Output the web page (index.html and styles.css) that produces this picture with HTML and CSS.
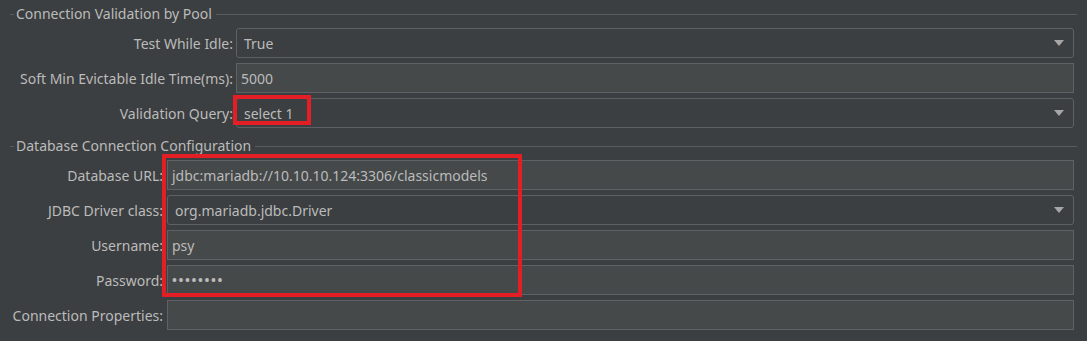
FILE: index.html
```html
<!DOCTYPE html>
<html>
<head>
<meta charset="utf-8">
<link rel="stylesheet" href="styles.css">
</head>
<body>
<div class="page">
  <section class="group group-pool">
    <div class="legend"><span class="dash"></span><span class="legend-text">Connection Validation by Pool</span><span class="rule"></span></div>
    <div class="form">
      <label class="lbl">Test While Idle:</label>
      <div class="combo"><span class="val">True</span><span class="arrow"></span></div>
      <label class="lbl">Soft Min Evictable Idle Time(ms):</label>
      <div class="field"><span class="val">5000</span></div>
      <label class="lbl">Validation Query:</label>
      <div class="combo"><span class="val">select 1</span><span class="arrow"></span></div>
    </div>
  </section>
  <section class="group group-db">
    <div class="legend"><span class="dash"></span><span class="legend-text">Database Connection Configuration</span><span class="rule"></span></div>
    <div class="form">
      <label class="lbl">Database URL:</label>
      <div class="field"><span class="val">jdbc:mariadb://10.10.10.124:3306/classicmodels</span></div>
      <label class="lbl">JDBC Driver class:</label>
      <div class="combo"><span class="val">org.mariadb.jdbc.Driver</span><span class="arrow"></span></div>
      <label class="lbl">Username:</label>
      <div class="field"><span class="val">psy</span></div>
      <label class="lbl">Password:</label>
      <div class="field"><span class="val dots">••••••••</span></div>
      <label class="lbl">Connection Properties:</label>
      <div class="field"><span class="val"></span></div>
    </div>
  </section>
  <div class="mark mark-query"></div>
  <div class="mark mark-db"></div>
</div>
</body>
</html>
```

FILE: styles.css
```css
html, body {
  margin: 0;
  padding: 0;
  background: #3c3f41;
}
body {
  font-family: "Noto Sans", "Open Sans", sans-serif;
  font-size: 14px;
  color: #bbbbbb;
}
.page {
  position: relative;
  width: 1087px;
  height: 341px;
  overflow: hidden;
}
.group {
  padding-right: 13px;
}
.legend {
  display: flex;
  align-items: center;
  height: 16px;
  margin-left: 10px;
}
.group-pool .legend {
  margin-top: 6px;
}
.group-db {
  margin-top: 10px;
}
.dash {
  width: 4px;
  height: 1px;
  background: #5a5d5f;
}
.legend-text {
  padding: 0 4px 0 2px;
  line-height: 16px;
  white-space: nowrap;
}
.rule {
  flex: 1;
  height: 1px;
  background: #5a5d5f;
  margin-right: -3px;
}
.form {
  display: grid;
  row-gap: 5px;
  align-items: center;
}
.group-pool .form {
  grid-template-columns: 233px 1fr;
  column-gap: 3px;
  margin-top: 6px;
}
.group-db .form {
  grid-template-columns: 163px 1fr;
  column-gap: 4px;
  margin-top: 6px;
}
.lbl {
  text-align: right;
  white-space: nowrap;
}
.combo, .field {
  height: 30px;
  box-sizing: border-box;
  display: flex;
  align-items: center;
}
.combo {
  border: 1px solid #5e6163;
  border-radius: 3px;
  background: #3c3f41;
  padding: 0 9px 0 7px;
}
.field {
  border: 1px solid #5f6264;
  background: #45494a;
  padding: 0 5px 0 4px;
}
.val {
  flex: 1;
  white-space: nowrap;
}
.dots {
  font-size: 13px;
  letter-spacing: 1.6px;
  font-weight: bold;
}
.arrow {
  width: 0;
  height: 0;
  border-left: 5px solid transparent;
  border-right: 5px solid transparent;
  border-top: 6px solid #a6a6a6;
}
.mark {
  position: absolute;
  border: 4px solid #e31e24;
  box-sizing: border-box;
}
.mark-query {
  left: 233px;
  top: 95px;
  width: 78px;
  height: 30px;
}
.mark-db {
  left: 162px;
  top: 154px;
  width: 360px;
  height: 143px;
}
```
